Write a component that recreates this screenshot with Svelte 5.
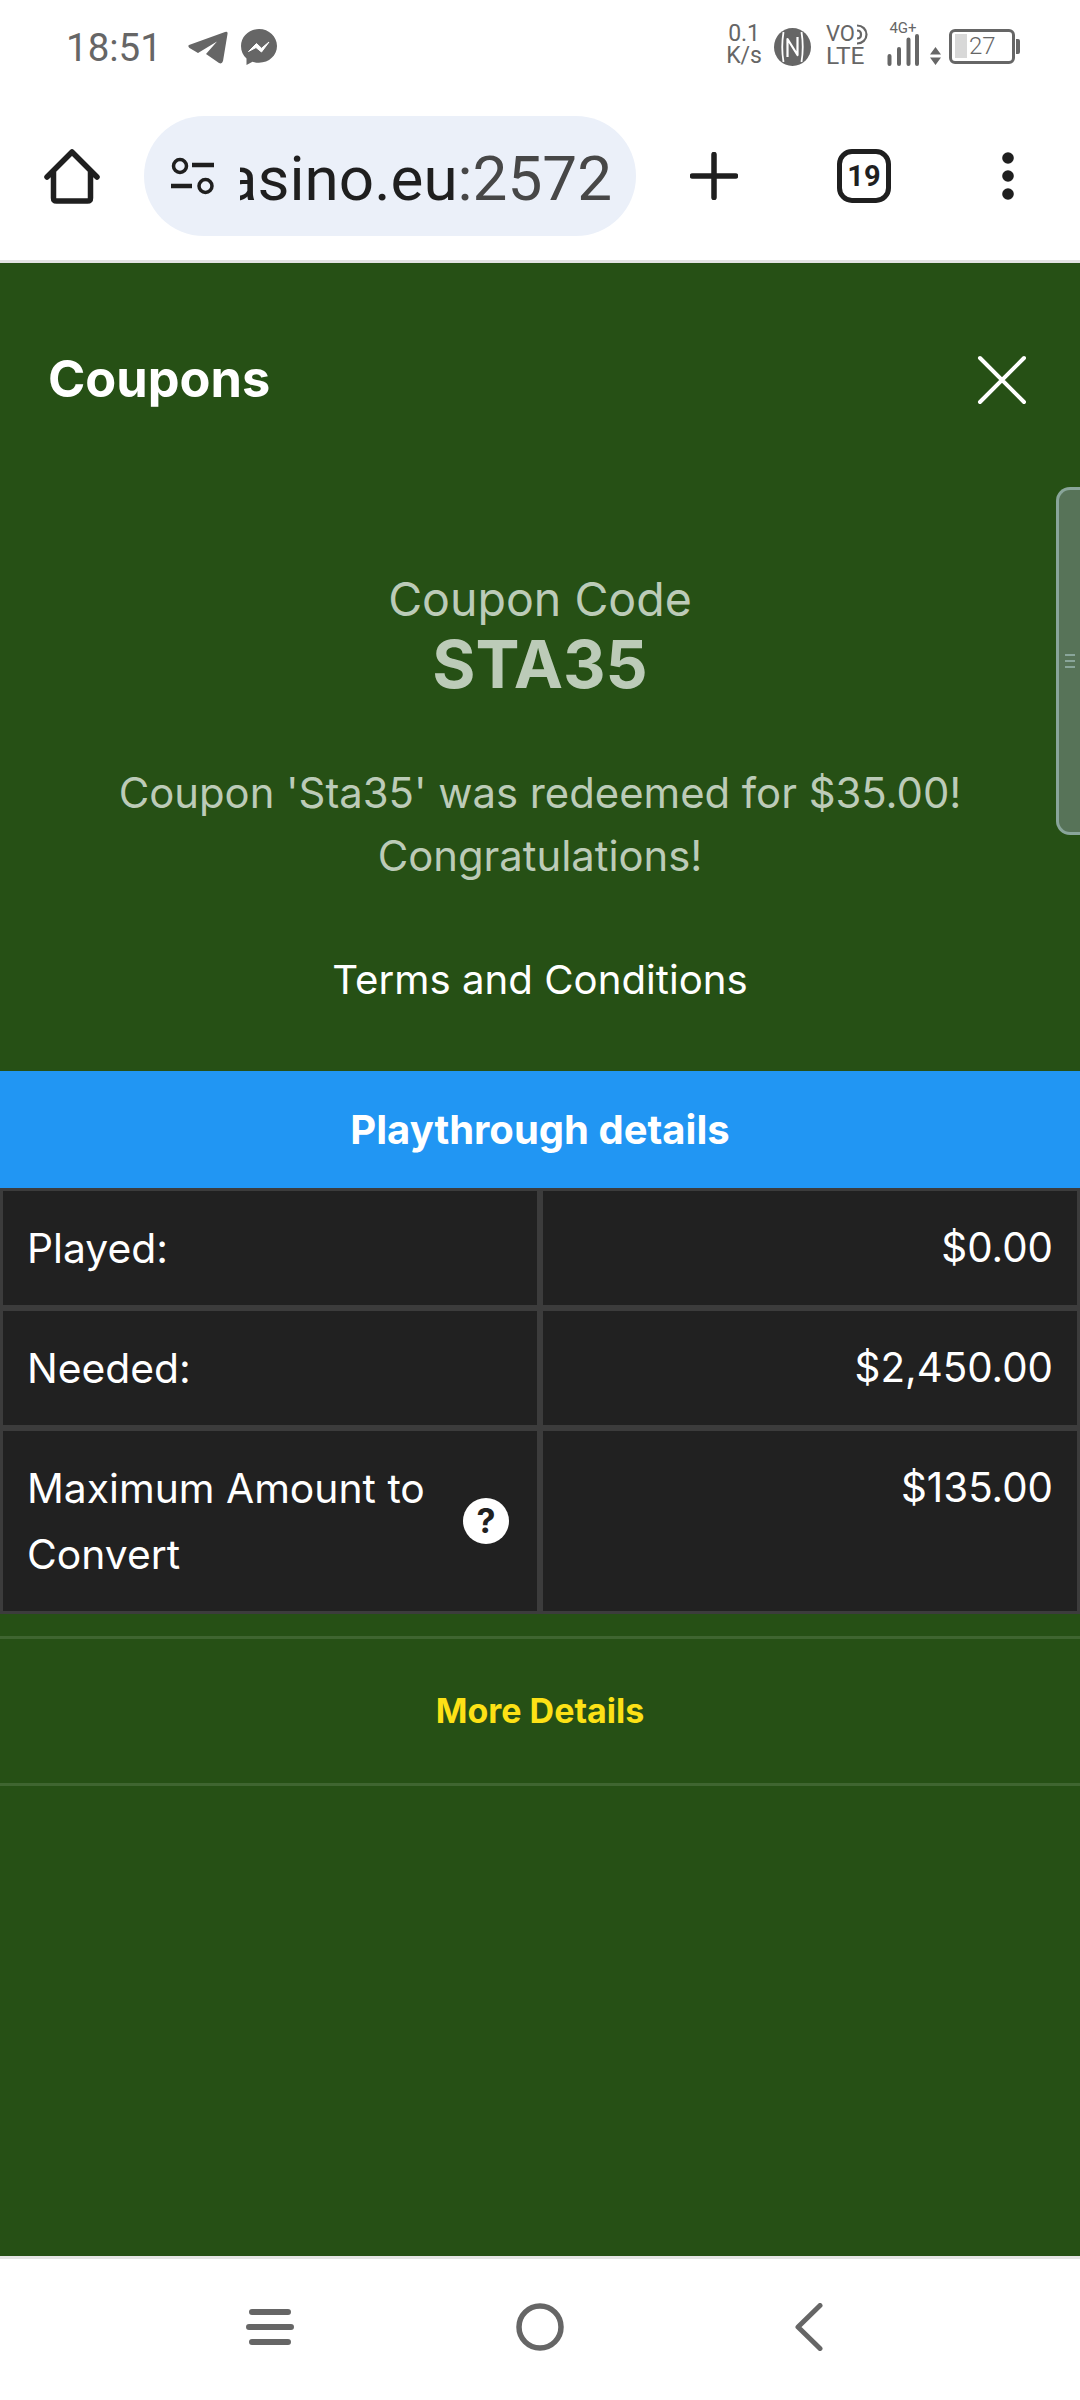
<script>
  // Coupon detail sheet inside a mobile browser frame.
  const rows = [
    { label: 'Played:', value: '$0.00' },
    { label: 'Needed:', value: '$2,450.00' },
    { label: 'Maximum Amount to Convert', value: '$135.00', help: true }
  ];
</script>

<div class="phone">
  <div class="status">
    <span class="time">18:51</span>
    <svg class="ic-telegram" width="40" height="33" viewBox="0 0 40 33">
      <path d="M1 14L37 1Q40 0 39.500 3L35 30Q34 33.500 31 32L18 23L29 10.500L10 22L1.500 17Q-.5 15 1 14Z" fill="#666" />
    </svg>
    <svg class="ic-messenger" width="36" height="36" viewBox="0 0 36 36">
      <path d="M18 0C8 0 0 7.500 0 17c0 5 2 9.500 5.500 12.500V36l6-3.200c2 .6 4.200 .9 6.500 .9 10 0 18-7.300 18-16.700S28 0 18 0z" fill="#666" />
      <path d="M7.500 22.500L15.500 14.500L20.500 19.300L28 13L20.500 23L15 18.500Z" fill="#fff" stroke="#fff" stroke-width="1" stroke-linejoin="round" />
    </svg>
    <span class="spacer"></span>
    <div class="speed"><span>0.1</span><span>K/s</span></div>
    <svg class="ic-nfc" width="37" height="38" viewBox="0 0 37 38">
      <ellipse cx="18.500" cy="19" rx="18.500" ry="19" fill="#666" />
      <path d="M9.500 4Q7 19 9.500 34M27.500 4Q30 19 27.500 34" stroke="#fff" stroke-width="1.800" fill="none" />
      <path d="M13.500 29V11L23.500 27V9" stroke="#fff" stroke-width="2.200" fill="none" stroke-linejoin="round" />
    </svg>
    <div class="volte">
      <span class="vo">VO<svg width="12" height="21" viewBox="0 0 12 21"><path d="M1 1.500c5.500 0 9.500 4 9.500 9s-4 9-9.500 9M1 6.500c2.500 0 4 1.800 4 4s-1.500 4-4 4" fill="none" stroke="#666" stroke-width="2.200" /></svg></span>
      <span>LTE</span>
    </div>
    <div class="signal">
      <span class="net">4G+</span>
      <svg width="32" height="32" viewBox="0 0 32 32">
        <path d="M2.500 22V30M12 15V30M21.500 5.500V30M30 2V30" stroke="#666" stroke-width="4" stroke-linecap="round" />
      </svg>
    </div>
    <svg class="ic-updown" width="11" height="18" viewBox="0 0 11 18">
      <path d="M5.500 0L11 7.500H0ZM5.500 18L0 10.500H11Z" fill="#666" />
    </svg>
    <div class="battery">
      <div class="shell">
        <span class="level"></span>
        <span class="pct">27</span>
      </div>
      <span class="nub"></span>
    </div>
  </div>

  <div class="toolbar">
    <svg class="ic-home" width="56" height="56" viewBox="0 0 56 56">
      <path d="M3 29L28 4L53 29M9.500 24V50Q9.500 53 12.500 53H43.500Q46.500 53 46.500 50V24" fill="none" stroke="#1f1f1f" stroke-width="5.500" stroke-linecap="round" stroke-linejoin="round" />
    </svg>
    <div class="urlbar">
      <svg class="ic-tune" width="44" height="38" viewBox="0 0 44 38">
        <circle cx="9" cy="9" r="6.500" fill="none" stroke="#1f1f1f" stroke-width="3.500" />
        <path d="M21 8H43M0 29H21" stroke="#1f1f1f" stroke-width="4.500" />
        <circle cx="34.500" cy="29" r="6.500" fill="none" stroke="#1f1f1f" stroke-width="3.500" />
      </svg>
      <div class="url"><span class="host">casino.eu</span><span class="port">:2572</span></div>
    </div>
    <svg class="ic-plus" width="48" height="48" viewBox="0 0 48 48">
      <path d="M2.500 24H45.500M24 2.500V45.500" stroke="#1f1f1f" stroke-width="5.500" stroke-linecap="round" />
    </svg>
    <div class="tabs">19</div>
    <svg class="ic-more" width="14" height="50" viewBox="0 0 14 50">
      <circle cx="7" cy="7" r="5.800" fill="#1f1f1f" />
      <circle cx="7" cy="25" r="5.800" fill="#1f1f1f" />
      <circle cx="7" cy="43" r="5.800" fill="#1f1f1f" />
    </svg>
  </div>

  <main class="sheet">
    <header class="sheet-head">
      <h1>Coupons</h1>
      <svg width="50" height="50" viewBox="0 0 50 50">
        <path d="M3 3L47 47M47 3L3 47" stroke="#fff" stroke-width="4" stroke-linecap="round" />
      </svg>
    </header>

    <section class="coupon">
      <p class="code-label">Coupon Code</p>
      <p class="code">STA35</p>
      <p class="message">Coupon 'Sta35' was redeemed for $35.00! Congratulations!</p>
      <p class="terms">Terms and Conditions</p>
    </section>

    <div class="pt-title">Playthrough details</div>
    <div class="pt-table">
      {#each rows as row}
        <div class="cell">
          <div class="label">
            <span>{row.label}</span>
            {#if row.help}
              <span class="help">?</span>
            {/if}
          </div>
        </div>
        <div class="cell value">{row.value}</div>
      {/each}
    </div>

    <div class="more">More Details</div>

    <div class="handle"><i></i><i></i><i></i></div>
  </main>

  <nav class="navbar">
    <svg width="48" height="36" viewBox="0 0 48 36">
      <path d="M6 3H42M3 18H45M6 33H42" stroke="#666" stroke-width="6" stroke-linecap="round" />
    </svg>
    <svg width="48" height="48" viewBox="0 0 48 48">
      <circle cx="24" cy="24" r="21" fill="none" stroke="#666" stroke-width="5.500" />
    </svg>
    <svg class="ic-back" width="28" height="48" viewBox="0 0 28 48">
      <path d="M25 2.500L3 24L25 45.500" fill="none" stroke="#666" stroke-width="5" stroke-linecap="round" stroke-linejoin="round" />
    </svg>
  </nav>
</div>

<style>
  :global(body) {
    margin: 0;
    background: #fff;
  }

  .phone {
    width: 1080px;
    height: 2400px;
    display: flex;
    flex-direction: column;
    font-family: Inter, "Noto Sans", sans-serif;
    overflow: hidden;
  }

  .status {
    height: 94px;
    flex: none;
    display: flex;
    align-items: center;
    padding: 0 60px 0 66px;
    color: #666;
    font-family: Roboto, sans-serif;
  }

  .time {
    font-size: 38.500px;
    margin-right: 26px;
  }

  .ic-messenger {
    margin-left: 13px;
  }

  .spacer {
    flex: 1;
  }

  .speed,
  .volte {
    display: flex;
    flex-direction: column;
    font-size: 23px;
    line-height: 22px;
    margin-top: -4px;
  }

  .speed {
    align-items: center;
    margin-right: 12px;
  }

  .ic-nfc {
    margin-right: 15px;
    margin-top: -1px;
  }

  .volte {
    font-size: 24.500px;
    margin-right: 19px;
  }

  .vo {
    display: flex;
    align-items: center;
    font-size: 22px;
    gap: 1px;
  }

  .signal {
    display: flex;
    flex-direction: column;
    align-items: center;
    font-size: 15px;
    line-height: 11px;
    margin-top: -6px;
  }

  .ic-updown {
    margin: 17px 8px 0 11px;
  }

  .battery {
    display: flex;
    align-items: center;
    gap: 1px;
    margin-top: -2px;
  }

  .shell {
    width: 66px;
    height: 35px;
    box-sizing: border-box;
    border: 3.500px solid #666;
    border-radius: 6px;
    display: flex;
    align-items: center;
    padding: 0 3px;
  }

  .level {
    width: 12px;
    height: 24px;
    background: #d8d8d8;
  }

  .pct {
    font-size: 24px;
    font-weight: 300;
    margin-left: 2px;
  }

  .nub {
    width: 4px;
    height: 15px;
    background: #666;
    border-radius: 0 2px 2px 0;
  }

  .toolbar {
    height: 164px;
    flex: none;
    display: flex;
    align-items: center;
    padding: 0 0 2px 44px;
    border-bottom: 3px solid #e2e2e2;
  }

  .urlbar {
    width: 492px;
    height: 120px;
    margin-left: 44px;
    border-radius: 60px;
    background: #ebf0f9;
    display: flex;
    align-items: center;
    padding-left: 27px;
    box-sizing: border-box;
  }

  .ic-tune {
    flex: none;
  }

  .url {
    width: 372px;
    margin: 4px 0 0 25px;
    display: flex;
    justify-content: flex-end;
    overflow: hidden;
    font-family: Roboto, sans-serif;
    font-size: 62px;
    white-space: nowrap;
  }

  .host {
    color: #1f1f1f;
  }

  .port {
    color: #474747;
  }

  .ic-plus {
    margin-left: 54px;
  }

  .tabs {
    width: 54px;
    height: 54px;
    box-sizing: border-box;
    margin-left: 99px;
    border: 5.500px solid #1f1f1f;
    border-radius: 15px;
    display: flex;
    align-items: center;
    justify-content: center;
    font-family: "Liberation Sans Narrow", Roboto, sans-serif;
    font-size: 29px;
    font-weight: 700;
    color: #1f1f1f;
  }

  .ic-more {
    margin-left: 110px;
  }

  .sheet {
    flex: 1;
    position: relative;
    background: #265015;
    display: flex;
    flex-direction: column;
  }

  .sheet-head {
    height: 304px;
    flex: none;
    display: flex;
    align-items: flex-start;
    justify-content: space-between;
    padding: 92px 53px 0 48px;
    box-sizing: border-box;
  }

  .sheet-head h1 {
    margin: -3px 0 0;
    font-size: 50.500px;
    line-height: 54px;
    font-weight: 700;
    color: #fff;
  }

  .coupon {
    height: 504px;
    flex: none;
    text-align: center;
    color: #bccbb8;
  }

  .coupon p {
    margin: 0;
  }

  .code-label {
    font-size: 46.500px;
    line-height: 56px;
    padding-top: 4px;
  }

  .code {
    font-size: 66px;
    line-height: 70px;
    font-weight: 700;
    padding-top: 2px;
  }

  .coupon .message {
    font-size: 41.800px;
    line-height: 63px;
    padding: 63px 100px 0;
  }

  .coupon .terms {
    font-size: 40.200px;
    line-height: 50px;
    margin-top: 67px;
    color: #fff;
  }

  .pt-title {
    height: 117px;
    flex: none;
    background: #2196f3;
    color: #fff;
    font-size: 40px;
    font-weight: 700;
    display: flex;
    align-items: center;
    justify-content: center;
  }

  .pt-table {
    display: grid;
    grid-template-columns: 1fr 1fr;
    gap: 6px;
    padding: 3px;
    background: #3c3c3c;
    color: #fff;
    font-size: 40.800px;
    line-height: 66px;
  }

  .cell {
    background: #212121;
    padding: 24px;
  }

  .value {
    text-align: right;
    font-size: 40.300px;
  }

  .label {
    display: flex;
    align-items: center;
    justify-content: space-between;
    gap: 24px;
  }

  .help {
    flex: none;
    width: 46px;
    height: 46px;
    border-radius: 50%;
    background: #fff;
    color: #212121;
    font-size: 34px;
    font-weight: 700;
    line-height: 46px;
    text-align: center;
    margin-right: 4px;
  }

  .more {
    height: 150px;
    flex: none;
    margin-top: 22px;
    padding-bottom: 2px;
    border-top: 3px solid #3f6530;
    border-bottom: 3px solid #3f6530;
    box-sizing: border-box;
    color: #fde116;
    font-size: 34px;
    font-weight: 700;
    display: flex;
    align-items: center;
    justify-content: center;
  }

  .handle {
    position: absolute;
    right: 0;
    top: 224px;
    width: 24px;
    height: 348px;
    box-sizing: border-box;
    background: #577358;
    border: 3px solid #89a59a;
    border-right: none;
    border-radius: 14px 0 0 14px;
    display: flex;
    flex-direction: column;
    justify-content: center;
    gap: 4px;
    padding-left: 6px;
  }

  .handle i {
    display: block;
    width: 10px;
    height: 2px;
    background: #89a59a;
  }

  .navbar {
    height: 136px;
    flex: none;
    padding-bottom: 5px;
    border-top: 3px solid #e4e4e4;
    background: #fff;
    display: grid;
    grid-template-columns: repeat(3, 270px);
    justify-content: center;
    justify-items: center;
    align-items: center;
  }

  .ic-back {
    margin-right: 2px;
  }
</style>
